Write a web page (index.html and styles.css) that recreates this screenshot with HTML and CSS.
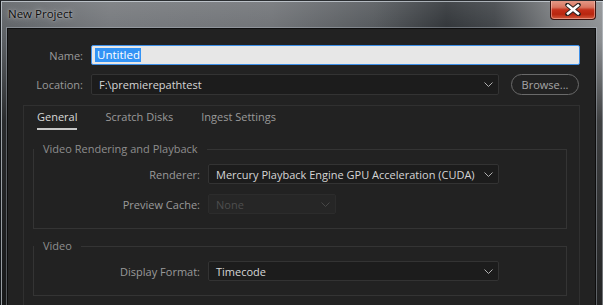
FILE: index.html
```html
<!DOCTYPE html>
<html>
<head>
<meta charset="utf-8">
<title>New Project</title>
<link rel="stylesheet" href="styles.css">
</head>
<body>
<div class="window">
  <div class="titlebar">
    <span class="title">New Project</span>
    <div class="close">
      <svg width="18" height="13" viewBox="0 0 18 13">
        <path d="M3.5 2 L14.5 11 M14.5 2 L3.5 11" stroke="#2b2220" stroke-width="4.6" stroke-linecap="round"/>
        <path d="M4 2.5 L14 10.5 M14 2.5 L4 10.5" stroke="#ffffff" stroke-width="2.6" stroke-linecap="square"/>
      </svg>
    </div>
  </div>
  <div class="client">
    <div class="row">
      <label class="lbl">Name:</label>
      <div class="text-input"><span class="sel">Untitled</span></div>
    </div>
    <div class="row loc-row">
      <label class="lbl">Location:</label>
      <div class="dropdown loc"><span class="val">F:\premierepathtest</span><svg class="chev" width="9" height="5" viewBox="0 0 9 5"><path d="M0.5 0.5 L4.5 4.5 L8.5 0.5" fill="none" stroke="#b0b0b0" stroke-width="1"/></svg></div>
      <div class="btn">Browse...</div>
    </div>
    <div class="tabpanel">
      <div class="tabs">
        <span class="tab active">General</span>
        <span class="tab">Scratch Disks</span>
        <span class="tab">Ingest Settings</span>
      </div>
      <fieldset class="group g1">
        <legend>Video Rendering and Playback</legend>
        <div class="frow">
          <span class="flbl">Renderer:</span>
          <div class="dropdown wide"><span class="val">Mercury Playback Engine GPU Acceleration (CUDA)</span><svg class="chev" width="9" height="5" viewBox="0 0 9 5"><path d="M0.5 0.5 L4.5 4.5 L8.5 0.5" fill="none" stroke="#b0b0b0" stroke-width="1"/></svg></div>
        </div>
        <div class="frow">
          <span class="flbl">Preview Cache:</span>
          <div class="dropdown narrow disabled"><span class="val">None</span><svg class="chev" width="9" height="5" viewBox="0 0 9 5"><path d="M0.5 0.5 L4.5 4.5 L8.5 0.5" fill="none" stroke="#474747" stroke-width="1"/></svg></div>
        </div>
      </fieldset>
      <fieldset class="group g2">
        <legend>Video</legend>
        <div class="frow">
          <span class="flbl">Display Format:</span>
          <div class="dropdown wide"><span class="val">Timecode</span><svg class="chev" width="9" height="5" viewBox="0 0 9 5"><path d="M0.5 0.5 L4.5 4.5 L8.5 0.5" fill="none" stroke="#b0b0b0" stroke-width="1"/></svg></div>
        </div>
      </fieldset>
    </div>
  </div>
</div>
</body>
</html>
```
FILE: styles.css
```css
* { box-sizing: border-box; }
html, body { margin: 0; padding: 0; }
body {
  width: 603px;
  height: 305px;
  overflow: hidden;
  font-family: "Open Sans", "Noto Sans", sans-serif;
  font-size: 11px;
  background: #1c2026;
}
.window {
  position: relative;
  width: 603px;
  height: 305px;
  overflow: hidden;
  background:
    linear-gradient(180deg, rgba(255,255,255,0.12) 0, rgba(255,255,255,0) 40px, rgba(0,0,0,0.55) 120px, rgba(0,0,0,0.75) 305px),
    linear-gradient(90deg, #5a5e62 0, #727579 18%, #6c6f73 45%, #505458 62%, #2b2f33 74%, #3b3f43 82%, #76797c 92%, #8c8f92 100%);
  border-left: 1px solid #15181b;
  border-top: 1px solid #2a2d30;
  box-shadow: inset 1px 1px 0 rgba(220,228,235,0.65), inset -1px 0 0 rgba(220,228,235,0.4);
}
.titlebar {
  height: 27px;
  display: flex;
  align-items: flex-start;
}
.title {
  margin: 5px 0 0 7px;
  font-family: "Open Sans", sans-serif;
  font-size: 11.5px;
  line-height: 16px;
  color: #0c0c0c;
  text-shadow: 0 0 6px rgba(255,255,255,0.55), 0 0 2px rgba(255,255,255,0.5);
}
.close {
  margin-left: auto;
  margin-right: 7px;
  margin-top: -1px;
  width: 46px;
  height: 20px;
  border: 1px solid #3b1410;
  border-top: none;
  border-radius: 0 0 4px 4px;
  background: linear-gradient(180deg, #e69e8c 0, #d97560 38%, #c4301a 52%, #b8260f 75%, #d25a3e 100%);
  box-shadow: inset 0 0 0 1px rgba(255,210,200,0.45);
  display: flex;
  align-items: center;
  justify-content: center;
}
.client {
  margin-left: 6px;
  width: 589px;
  height: 277px;
  background: #222222;
  border: 1px solid #0e0e0e;
  border-bottom: none;
  box-shadow: 0 0 0 1px rgba(200,210,220,0.35);
  padding-top: 16px;
  color: #a8a8a8;
}
.row {
  display: flex;
  align-items: center;
  height: 20px;
}
.loc-row {
  margin-top: 9px;
  height: 21px;
}
.lbl {
  width: 75px;
  text-align: right;
  margin-right: 8px;
  color: #9a9a9a;
}
.text-input {
  width: 489px;
  height: 20px;
  background: #e7e7e7;
  border: 1px solid #3d8fe8;
  border-radius: 2px;
  padding: 2px 0 0 3px;
  display: flex;
  align-items: flex-start;
}
.sel {
  background: #3393f5;
  color: #ffffff;
  font-size: 11.5px;
  line-height: 14px;
  padding: 0 1px 0 2px;
}
.dropdown {
  display: flex;
  align-items: center;
  justify-content: space-between;
  height: 20px;
  background: #1c1c1c;
  border: 1px solid #333333;
  border-radius: 2px;
  padding: 0 5px 0 7px;
  color: #d6d6d6;
  white-space: nowrap;
}
.dropdown.loc {
  width: 408px;
  height: 21px;
}
.chev { flex: none; }
.btn {
  margin-left: 12px;
  width: 68px;
  height: 21px;
  border: 1px solid #6a6a6a;
  border-radius: 11px;
  color: #a6a6a6;
  display: flex;
  align-items: center;
  justify-content: center;
}
.tabpanel {
  margin: 10px 0 0 15px;
  width: 557px;
  height: 220px;
  border: 1px solid #303030;
  border-bottom: none;
  padding: 3px 0 0 9px;
}
.tabs {
  display: flex;
  gap: 28px;
  padding-left: 4px;
}
.tab {
  line-height: 16px;
  padding-bottom: 3px;
  color: #9a9a9a;
  border-bottom: 2px solid transparent;
}
.tab.active {
  color: #d8d8d8;
  border-bottom-color: #c8c8c8;
}
.group {
  width: 534px;
  margin: 11px 0 0 0;
  padding: 7px 0 14px 0;
  border: 1px solid #343434;
  min-width: 0;
}
.g2 { margin-top: 9px; }
legend {
  padding: 0 9px;
  margin: 0;
  line-height: 16px;
  color: #8e8e8e;
}
.frow {
  display: flex;
  align-items: center;
  height: 20px;
}
.frow + .frow { margin-top: 10px; }
.flbl {
  width: 166px;
  text-align: right;
  margin-right: 8px;
  color: #9a9a9a;
}
.dropdown.wide { width: 291px; }
.dropdown.narrow { width: 128px; }
.dropdown.disabled {
  background: #262626;
  border-color: #2c2c2c;
  color: #4e4e4e;
}
```
